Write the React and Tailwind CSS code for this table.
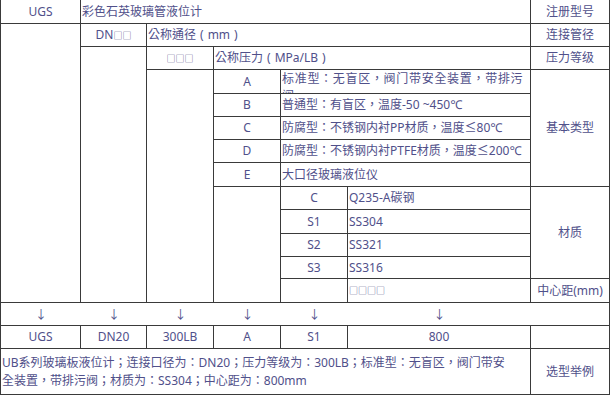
import React from "react";

const B = "border-r border-b border-[#3a3a3a]";
const base = "flex items-center overflow-hidden whitespace-nowrap";

function Cell({ className = "", children, left = false }) {
  return (
    <div className={`${B} ${base} ${left ? "justify-start pl-[1px]" : "justify-center"} ${className}`}>
      {children}
    </div>
  );
}

function Box({ n }) {
  return <span className="text-[9px]">{"□".repeat(n)}</span>;
}

function P({ children }) {
  return <span className="px-[4px]">{children}</span>;
}

function Arrow({ col }) {
  return (
    <div className={`border-b border-[#3a3a3a] flex items-center justify-center row-start-14 font-['Noto_Sans_CJK_SC',sans-serif] ${col}`}>
      ↓
    </div>
  );
}

export default function App() {
  return (
    <div className="w-[610px] h-[395px] bg-white overflow-hidden">
      <div className="grid border-l border-[#3a3a3a] text-[12px] text-[#50508a] leading-none font-['Noto_Sans','Noto_Sans_CJK_TC',sans-serif] [font-feature-settings:'chws'_0,'halt'_0,'palt'_0] [text-spacing-trim:space-all] grid-cols-[80px_66px_67px_67px_67px_183px_79px] grid-rows-[24px_23px_23px_24px_23px_23px_23px_24px_23px_24px_23px_22px_24px_23px_23px_46px]">
        {/* Row 1 */}
        <Cell className="col-start-1 row-start-1">UGS</Cell>
        <Cell className="col-start-2 col-span-5 row-start-1" left>彩色石英玻璃管液位计</Cell>
        <Cell className="col-start-7 row-start-1">注册型号</Cell>

        {/* Row 2 */}
        <Cell className="col-start-1 row-start-2 row-span-12" />
        <Cell className="col-start-2 row-start-2">DN<Box n={2} /></Cell>
        <Cell className="col-start-3 col-span-4 row-start-2" left>
          公称通径<P>(</P>mm<P>)</P>
        </Cell>
        <Cell className="col-start-7 row-start-2">连接管径</Cell>

        {/* Row 3 */}
        <Cell className="col-start-2 row-start-3 row-span-11" />
        <Cell className="col-start-3 row-start-3"><Box n={3} /></Cell>
        <Cell className="col-start-4 col-span-3 row-start-3" left>
          公称压力<P>(</P>MPa/LB<P>)</P>
        </Cell>
        <Cell className="col-start-7 row-start-3">压力等级</Cell>

        {/* Row 4-8 */}
        <Cell className="col-start-3 row-start-4 row-span-10" />
        <Cell className="col-start-4 row-start-4">A</Cell>
        <div className={`${B} col-start-5 col-span-2 row-start-4 overflow-hidden pl-[1px] leading-[17px] tracking-[0.7px]`}>
          标准型：无盲区，阀门带安全装置，带排污阀
        </div>
        <Cell className="col-start-7 row-start-4 row-span-5">基本类型</Cell>

        <Cell className="col-start-4 row-start-5">B</Cell>
        <Cell className="col-start-5 col-span-2 row-start-5" left>普通型：有盲区，温度-50 ~450℃</Cell>
        <Cell className="col-start-4 row-start-6">C</Cell>
        <Cell className="col-start-5 col-span-2 row-start-6" left>防腐型：不锈钢内衬PP材质，温度≤80℃</Cell>
        <Cell className="col-start-4 row-start-7">D</Cell>
        <Cell className="col-start-5 col-span-2 row-start-7" left>防腐型：不锈钢内衬PTFE材质，温度≤200℃</Cell>
        <Cell className="col-start-4 row-start-8">E</Cell>
        <Cell className="col-start-5 col-span-2 row-start-8" left>大口径玻璃液位仪</Cell>

        {/* Row 9-13 */}
        <Cell className="col-start-4 row-start-9 row-span-5" />
        <Cell className="col-start-5 row-start-9">C</Cell>
        <Cell className="col-start-6 row-start-9" left>Q235-A碳钢</Cell>
        <Cell className="col-start-7 row-start-9 row-span-4">材质</Cell>
        <Cell className="col-start-5 row-start-10">S1</Cell>
        <Cell className="col-start-6 row-start-10" left>SS304</Cell>
        <Cell className="col-start-5 row-start-11">S2</Cell>
        <Cell className="col-start-6 row-start-11" left>SS321</Cell>
        <Cell className="col-start-5 row-start-12">S3</Cell>
        <Cell className="col-start-6 row-start-12" left>SS316</Cell>
        <Cell className="col-start-5 row-start-13" />
        <Cell className="col-start-6 row-start-13" left><Box n={4} /></Cell>
        <Cell className="col-start-7 row-start-13">中心距(mm)</Cell>

        {/* Row 14 arrows */}
        <Arrow col="col-start-1" />
        <Arrow col="col-start-2" />
        <Arrow col="col-start-3" />
        <Arrow col="col-start-4" />
        <Arrow col="col-start-5" />
        <Arrow col="col-start-6" />
        <div className={`${B} col-start-7 row-start-14`} />

        {/* Row 15 */}
        <Cell className="col-start-1 row-start-15">UGS</Cell>
        <Cell className="col-start-2 row-start-15">DN20</Cell>
        <Cell className="col-start-3 row-start-15">300LB</Cell>
        <Cell className="col-start-4 row-start-15">A</Cell>
        <Cell className="col-start-5 row-start-15">S1</Cell>
        <Cell className="col-start-6 row-start-15">800</Cell>
        <Cell className="col-start-7 row-start-15" />

        {/* Row 16 */}
        <div className={`${B} col-start-1 col-span-6 row-start-16 flex flex-col justify-center overflow-hidden pl-[1px] leading-[18px] whitespace-nowrap`}>
          <div>UB系列玻璃板液位计；连接口径为：DN20；压力等级为：300LB；标准型：无盲区，阀门带安</div>
          <div>全装置，带排污阀；材质为：SS304；中心距为：800mm</div>
        </div>
        <Cell className="col-start-7 row-start-16">选型举例</Cell>
      </div>
    </div>
  );
}
